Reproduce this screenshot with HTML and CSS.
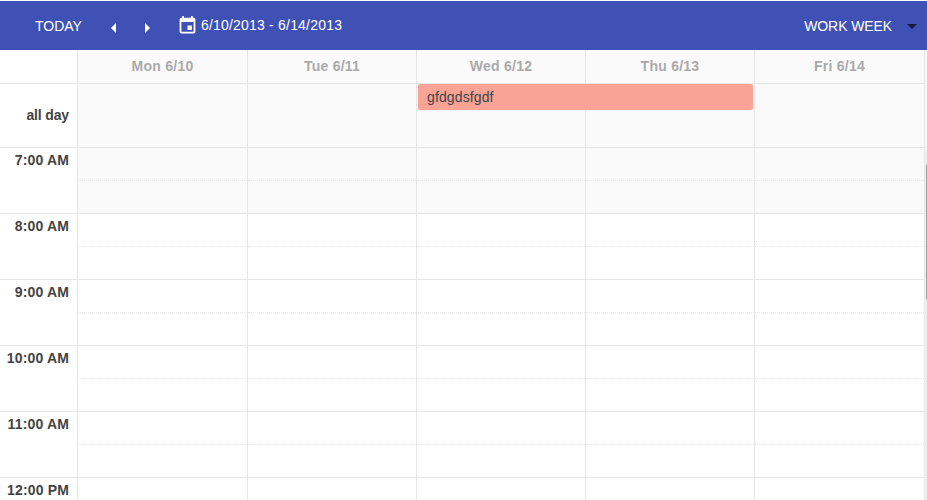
FILE: index.html
```html
<!DOCTYPE html>
<html lang="en">
<head>
<meta charset="utf-8">
<title>Scheduler</title>
<link rel="stylesheet" href="styles.css">
</head>
<body>
<div class="scheduler">
  <header class="toolbar">
    <span class="today">TODAY</span>
    <span class="nav nav-prev"><svg width="5" height="10" viewBox="0 0 5 10"><path d="M5 0V10L0 5Z" fill="#fff"/></svg></span>
    <span class="nav nav-next"><svg width="5" height="10" viewBox="0 0 5 10"><path d="M0 0V10L5 5Z" fill="#fff"/></svg></span>
    <svg class="cal" width="21" height="21" viewBox="0 0 24 24"><path fill="#fff" d="M17 12h-5v5h5v-5zM16 1v2H8V1H6v2H5c-1.11 0-1.99.9-1.99 2L3 19c0 1.1.89 2 2 2h14c1.1 0 2-.9 2-2V5c0-1.1-.9-2-2-2h-1V1h-2zm3 18H5V8h14v11z"/></svg>
    <span class="range">6/10/2013 - 6/14/2013</span>
    <span class="view">WORK WEEK</span>
    <span class="caret"></span>
  </header>
  <div class="grid head-row">
    <div class="corner"></div>
    <div class="day">Mon 6/10</div>
    <div class="day">Tue 6/11</div>
    <div class="day">Wed 6/12</div>
    <div class="day">Thu 6/13</div>
    <div class="day last">Fri 6/14</div>
  </div>
  <div class="grid allday-row">
    <div class="label allday-label">all day</div>
    <div class="allday"></div>
    <div class="allday"></div>
    <div class="allday"></div>
    <div class="allday"></div>
    <div class="allday last"></div>
    <div class="event">gfdgdsfgdf</div>
  </div>
  <div class="hours">
    <div class="grid hour off">
      <div class="label">7:00 AM</div>
      <div class="slot"></div><div class="slot"></div><div class="slot"></div><div class="slot"></div><div class="slot last"></div>
    </div>
    <div class="grid hour">
      <div class="label">8:00 AM</div>
      <div class="slot"></div><div class="slot"></div><div class="slot"></div><div class="slot"></div><div class="slot last"></div>
    </div>
    <div class="grid hour">
      <div class="label">9:00 AM</div>
      <div class="slot"></div><div class="slot"></div><div class="slot"></div><div class="slot"></div><div class="slot last"></div>
    </div>
    <div class="grid hour">
      <div class="label">10:00 AM</div>
      <div class="slot"></div><div class="slot"></div><div class="slot"></div><div class="slot"></div><div class="slot last"></div>
    </div>
    <div class="grid hour">
      <div class="label">11:00 AM</div>
      <div class="slot"></div><div class="slot"></div><div class="slot"></div><div class="slot"></div><div class="slot last"></div>
    </div>
    <div class="grid hour">
      <div class="label">12:00 PM</div>
      <div class="slot"></div><div class="slot"></div><div class="slot"></div><div class="slot"></div><div class="slot last"></div>
    </div>
    <div class="scrollbar"><div class="thumb"></div></div>
  </div>
</div>
</body>
</html>
```
FILE: styles.css
```css
html, body {
  margin: 0;
  height: 100%;
  overflow: hidden;
  background: #fff;
}
.scheduler {
  height: 500px;
  overflow: hidden;
  border-top: 1px solid #fff;
  box-sizing: border-box;
  background: #f8f8f8;
  font-family: "Liberation Sans", Arial, sans-serif;
}
.toolbar {
  display: flex;
  align-items: center;
  height: 49px;
  background: #3f51b5;
  color: #fff;
  font-size: 14px;
}
.today { margin-left: 35px; }
.nav { display: flex; margin-top: 5px; }
.nav-prev { margin-left: 29px; }
.nav-next { margin-left: 29px; }
.cal { margin-left: 27px; margin-top: 0; }
.range { margin-left: 3px; margin-top: -2px; letter-spacing: 0.2px; }
.view { margin-left: auto; letter-spacing: -0.1px; }
.caret {
  width: 0;
  height: 0;
  margin: 1px 10px 0 15px;
  border-left: 5px solid transparent;
  border-right: 5px solid transparent;
  border-top: 5px solid #14193f;
}
.grid {
  display: grid;
  grid-template-columns: 77px 170px 169px 169px 169px 171px;
  width: 925px;
}
.head-row { height: 33px; border-bottom: 1px solid #e6e6e6; }
.corner { background: #fff; }
.day {
  background: #fafafa;
  border-left: 1px solid #e6e6e6;
  color: #aaa;
  font-size: 14px;
  font-weight: bold;
  letter-spacing: 0.25px;
  line-height: 33px;
  text-align: center;
}
.last { border-right: 1px solid #e6e6e6; }
.allday-row { position: relative; height: 63px; border-bottom: 1px solid #e6e6e6; }
.allday { background: #fafafa; border-left: 1px solid #e6e6e6; }
.label {
  padding-right: 8px;
  background: #fff;
  color: #444;
  font-size: 14px;
  font-weight: bold;
  letter-spacing: 0.15px;
  text-align: right;
}
.allday-label { line-height: 63px; letter-spacing: -0.15px; }
.event {
  position: absolute;
  left: 418px;
  top: 0;
  width: 335px;
  height: 26px;
  box-sizing: border-box;
  padding-left: 9px;
  background: #f9a397;
  border-radius: 2px;
  color: #444;
  font-size: 14px;
  letter-spacing: 0.12px;
  line-height: 27px;
}
.hours { position: relative; background: #fff; }
.hour { height: 65px; border-bottom: 1px solid #e6e6e6; background: #fff; }
.hour .label { padding-top: 5px; line-height: 15px; }
.slot {
  border-left: 1px solid #e6e6e6;
  position: relative;
}
.slot::after {
  content: "";
  position: absolute;
  left: 0;
  right: 0;
  top: 32px;
  border-top: 1px dotted #e6e6e6;
}
.off .slot { background: #fafafa; }
.scrollbar {
  position: absolute;
  top: 0;
  right: 0;
  display: flex;
  justify-content: flex-end;
  width: 2px;
  height: 400px;
  background: #f0f0f0;
}
.thumb {
  margin-top: 17px;
  width: 1px;
  height: 134px;
  background: #a0a0a0;
}
```
